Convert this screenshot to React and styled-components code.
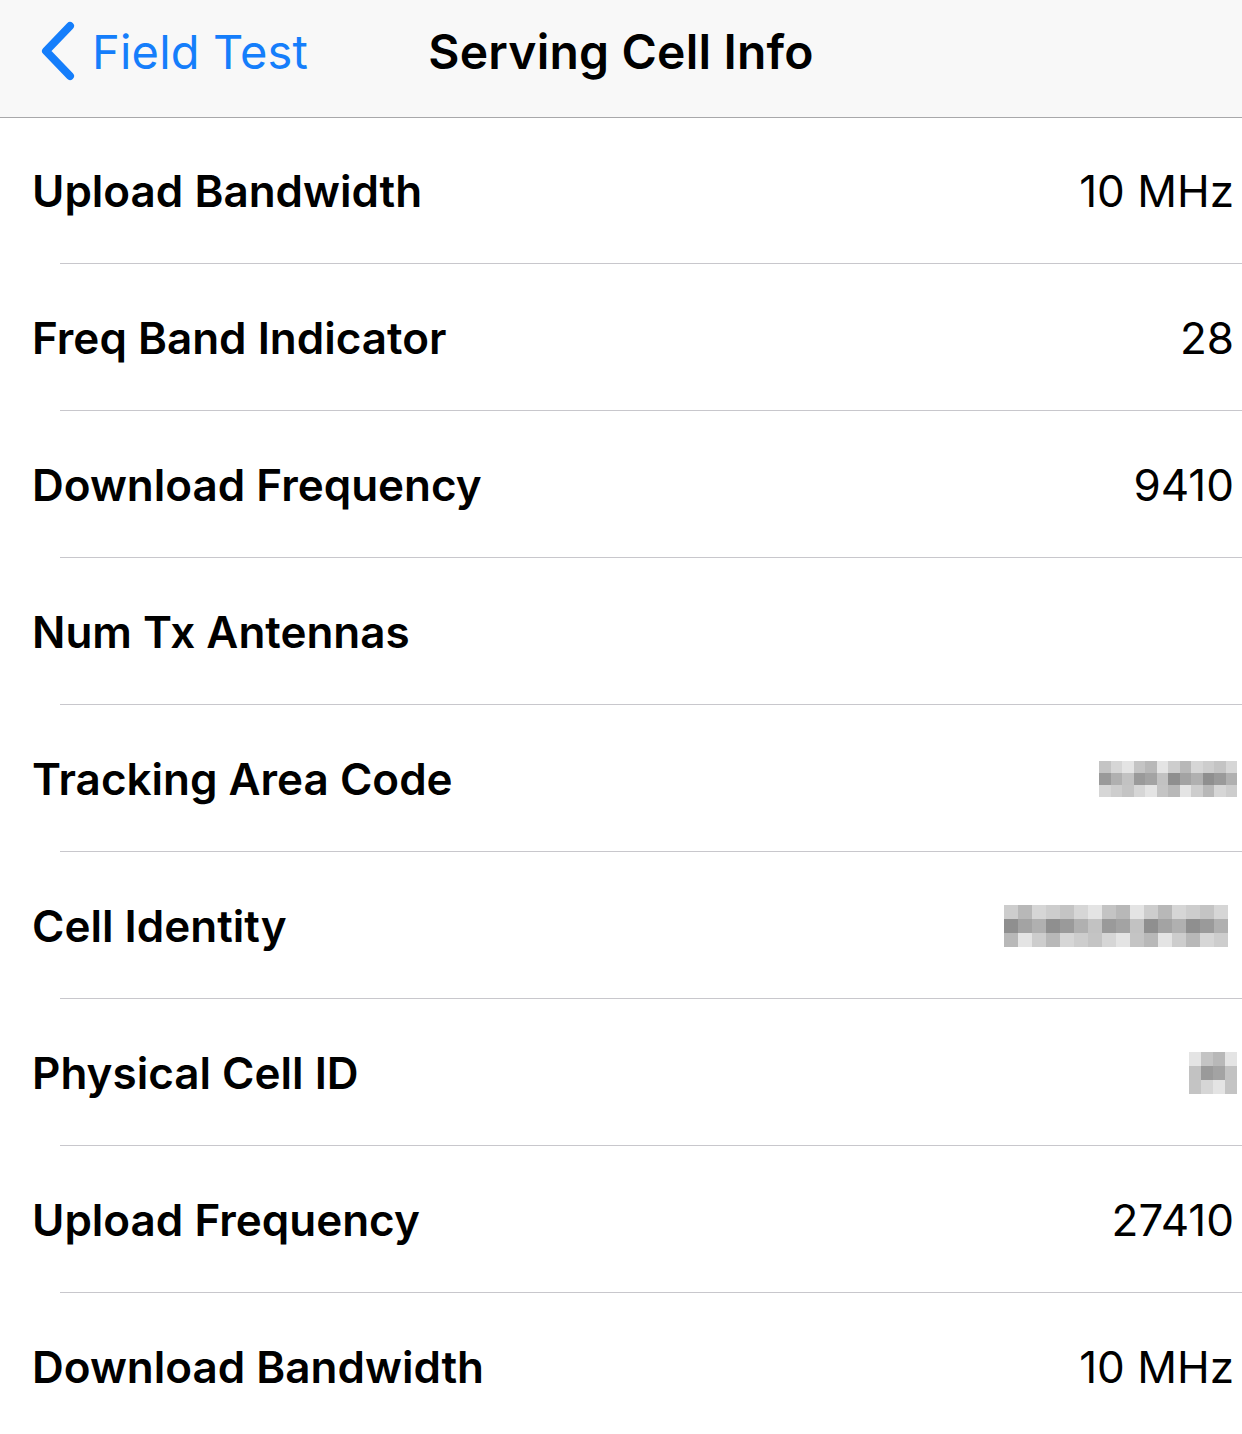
import React from 'react';
import styled, { createGlobalStyle } from 'styled-components';

const GlobalStyle = createGlobalStyle`
  html, body {
    margin: 0;
    padding: 0;
    background: #ffffff;
  }
  body {
    font-family: Inter, "Noto Sans", sans-serif;
    -webkit-font-smoothing: antialiased;
  }
`;

const Page = styled.div`
  width: 1242px;
  height: 1434px;
  overflow: hidden;
  background: #ffffff;
`;

const NavBar = styled.div`
  height: 118px;
  box-sizing: border-box;
  background: #f8f8f8;
  border-bottom: 1px solid #a8a8aa;
  display: grid;
  grid-template-columns: 1fr auto 1fr;
  align-items: center;
  padding-bottom: 15px;
`;

const BackButton = styled.div`
  display: flex;
  align-items: center;
  gap: 16px;
  padding-left: 38px;
  color: #157efb;
  font-size: 47px;
  font-weight: 400;
  letter-spacing: 0.2px;
`;

const Title = styled.div`
  color: #000;
  font-size: 48px;
  font-weight: 600;
  letter-spacing: 0.2px;
`;

const List = styled.div`
  display: flex;
  flex-direction: column;
`;

const Row = styled.div`
  height: 146px;
  display: flex;
  align-items: center;
  justify-content: space-between;
  padding: 0 8px 0 32px;
  box-sizing: content-box;
  border-bottom: 1px solid transparent;
  position: relative;
  &::after {
    content: '';
    position: absolute;
    left: 60px;
    right: 0;
    bottom: 0;
    height: 1px;
    background: ${p => (p.$last ? 'transparent' : '#c8c7cc')};
  }
`;

const Label = styled.span`
  font-size: 44px;
  font-weight: 600;
  color: #000;
`;

const Value = styled.span`
  font-size: 44px;
  font-weight: 400;
  color: #000;
`;

const Mosaic = styled.div`
  display: grid;
  grid-template-columns: repeat(${p => p.$cols}, ${p => p.$w}px);
  grid-auto-rows: ${p => p.$h}px;
  margin-right: ${p => p.$mr || 0}px;
`;

const Tile = styled.div`
  background: ${p => p.$c};
`;

const light = ['#d6d6d6', '#c4c4c4', '#e4e4e4', '#b8b8b8', '#cdcdcd'];
const dark = ['#a3a3a3', '#8f8f8f', '#b0b0b0', '#9a9a9a', '#c2c2c2'];

const Blur = ({ cols, rows, w, h, seed, mr }) => {
  const tiles = [];
  for (let r = 0; r < rows; r++) {
    for (let c = 0; c < cols; c++) {
      const k = (c * 3 + r * 2 + seed + ((c * c) % 4)) % 5;
      const set = r === 1 ? dark : light;
      tiles.push(<Tile key={`${r}-${c}`} $c={set[k]} />);
    }
  }
  return (
    <Mosaic $cols={cols} $w={w} $h={h} $mr={mr}>
      {tiles}
    </Mosaic>
  );
};

const Chevron = () => (
  <svg width="38" height="62" viewBox="0 0 38 62">
    <path d="M32 6 L8 31 L32 56" fill="none" stroke="#157efb" strokeWidth="8" strokeLinecap="round" strokeLinejoin="round" />
  </svg>
);

const rows = [
  { label: 'Upload Bandwidth', value: '10 MHz' },
  { label: 'Freq Band Indicator', value: '28' },
  { label: 'Download Frequency', value: '9410' },
  { label: 'Num Tx Antennas', value: '' },
  { label: 'Tracking Area Code', blur: { cols: 12, rows: 3, w: 11.5, h: 12, seed: 1, mr: -3 } },
  { label: 'Cell Identity', blur: { cols: 16, rows: 3, w: 14, h: 14, seed: 4, mr: 6 } },
  { label: 'Physical Cell ID', blur: { cols: 4, rows: 3, w: 12, h: 14, seed: 2, mr: -3 } },
  { label: 'Upload Frequency', value: '27410' },
  { label: 'Download Bandwidth', value: '10 MHz' },
];

export default function App() {
  return (
    <Page>
      <GlobalStyle />
      <NavBar>
        <BackButton>
          <Chevron />
          Field Test
        </BackButton>
        <Title>Serving Cell Info</Title>
        <div />
      </NavBar>
      <List>
        {rows.map((r, i) => (
          <Row key={r.label} $last={i === rows.length - 1}>
            <Label>{r.label}</Label>
            {r.blur ? <Blur {...r.blur} /> : <Value>{r.value}</Value>}
          </Row>
        ))}
      </List>
    </Page>
  );
}
